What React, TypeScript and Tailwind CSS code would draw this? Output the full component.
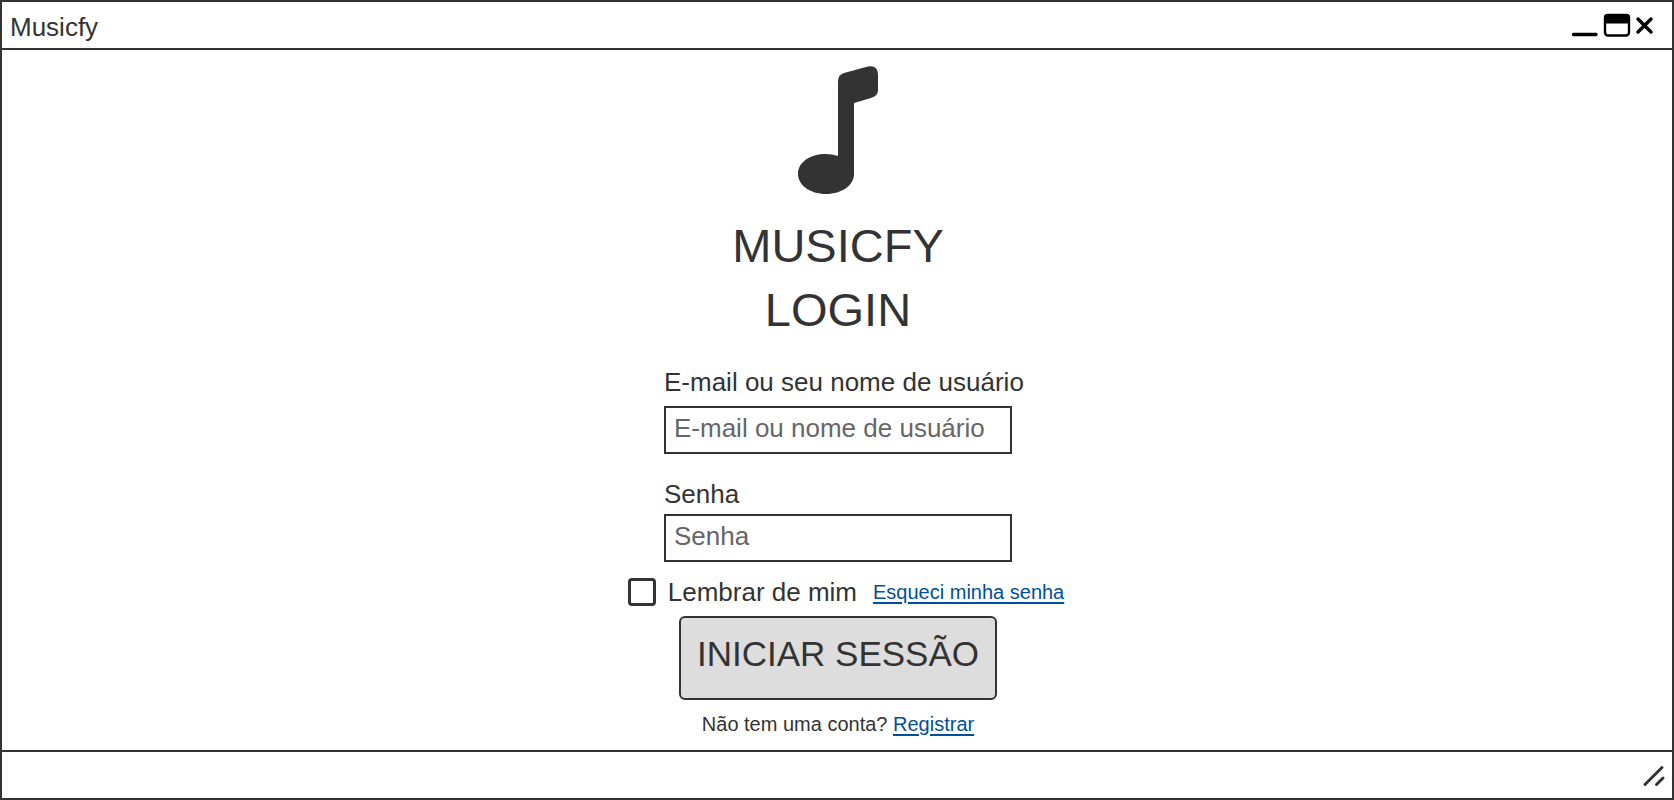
import React from "react";

function MusicNote() {
  return (
    <svg aria-hidden="true" width="80" height="128" viewBox="0 0 80 128" fill="#333333" className="shrink-0">
      <path d="M40 90V15Q40 9 46 7L68 1Q80-2 80 9V24Q80 30 73 32L56 37V108C56 119 44 128 28 128C12 128 0 119 0 108C0 96 12 88 28 88Q34 88 40 90Z" />
    </svg>
  );
}

function WindowControls() {
  return (
    <div className="flex gap-1 text-black">
      <button type="button" aria-label="Minimizar">
        <svg width="28" height="28" viewBox="0 0 28 28" fill="none" stroke="currentColor" strokeWidth="3.4" strokeLinecap="round">
          <path d="M2.5 23.5H25" />
        </svg>
      </button>
      <button type="button" aria-label="Maximizar">
        <svg width="28" height="28" viewBox="0 0 28 28">
          <rect x="2" y="4" width="24" height="20.5" rx="3" fill="white" stroke="currentColor" strokeWidth="2.4" />
          <path d="M1 12.5V6Q1 3 4 3H24Q27 3 27 6V12.5Z" fill="currentColor" />
        </svg>
      </button>
      <button type="button" aria-label="Fechar">
        <svg width="20" height="28" viewBox="0 0 20 28" fill="none" stroke="currentColor" strokeWidth="3.4" strokeLinecap="round">
          <path d="M3 8L16 21M16 8L3 21" />
        </svg>
      </button>
    </div>
  );
}

type FieldProps = { id: string; label: string; placeholder: string; type: string; gap?: string };

function Field({ id, label, placeholder, type, gap = "gap-0" }: FieldProps) {
  return (
    <div className={`flex flex-col ${gap}`}>
      <label htmlFor={id} className="whitespace-nowrap leading-10">
        {label}
      </label>
      <input
        id={id}
        type={type}
        placeholder={placeholder}
        className="h-12 w-full border-2 border-[#333333] bg-white px-2 pb-1 placeholder:text-[#666666] placeholder:opacity-100"
      />
    </div>
  );
}

export default function App() {
  return (
    <div className="flex min-h-screen flex-col border-2 border-[#333333] bg-white font-['Liberation_Sans',Arial,sans-serif] text-[26px] text-[#333333]">
      <header className="flex h-12 shrink-0 items-center justify-between border-b-2 border-[#333333] pr-[17px] pl-2">
        <span className="pt-1">Musicfy</span>
        <WindowControls />
      </header>

      <main className="flex grow flex-col items-center pt-4 pl-0.5">
        <MusicNote />
        <h1 className="mt-5 flex flex-col text-center text-[47px] leading-16">
          <span>MUSICFY</span>
          <span>LOGIN</span>
        </h1>

        <form className="flex flex-col items-center" onSubmit={(event) => event.preventDefault()}>
          <div className="mt-5 flex w-[348px] flex-col gap-5">
            <Field
              id="user"
              label="E-mail ou seu nome de usuário"
              placeholder="E-mail ou nome de usuário"
              type="text"
              gap="gap-1"
            />
            <Field id="password" label="Senha" placeholder="Senha" type="password" />
          </div>

          <div className="mt-3 flex h-9 items-center gap-4 pl-4 whitespace-nowrap">
            <label className="flex items-center gap-3">
              <input
                type="checkbox"
                className="size-7 appearance-none rounded border-3 border-[#333333] bg-white checked:bg-[#333333]"
              />
              Lembrar de mim
            </label>
            <a href="#recuperar" className="text-xl text-[#004f9e] underline decoration-2 underline-offset-3">
              Esqueci minha senha
            </a>
          </div>

          <button
            type="submit"
            className="mt-[6px] h-[84px] w-[318px] rounded-md border-2 border-[#333333] bg-[#dddddd] pb-2 text-[35px] whitespace-nowrap"
          >
            INICIAR SESSÃO
          </button>
        </form>

        <p className="mt-2 mb-2 text-xl leading-8">
          Não tem uma conta?{" "}
          <a href="#registrar" className="text-[#004f9e] underline decoration-2 underline-offset-3">
            Registrar
          </a>
        </p>
      </main>

      <footer className="flex h-12 shrink-0 items-center justify-end border-t-2 border-[#333333] pr-[6px]">
        <svg aria-hidden="true" width="24" height="24" viewBox="0 0 24 24" fill="none" stroke="#333333" strokeWidth="3" strokeLinecap="round">
          <path d="M3 21.5L20 4.5M14.5 21.5L21 15" />
        </svg>
      </footer>
    </div>
  );
}
